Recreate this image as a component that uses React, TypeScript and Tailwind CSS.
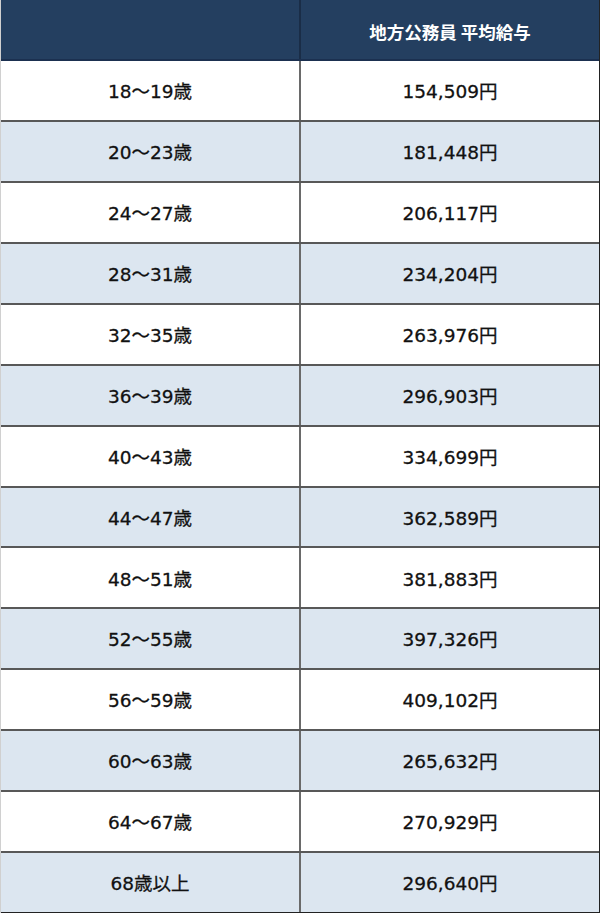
const rows: [string, string][] = [
  ["18～19歳", "154,509円"],
  ["20～23歳", "181,448円"],
  ["24～27歳", "206,117円"],
  ["28～31歳", "234,204円"],
  ["32～35歳", "263,976円"],
  ["36～39歳", "296,903円"],
  ["40～43歳", "334,699円"],
  ["44～47歳", "362,589円"],
  ["48～51歳", "381,883円"],
  ["52～55歳", "397,326円"],
  ["56～59歳", "409,102円"],
  ["60～63歳", "265,632円"],
  ["64～67歳", "270,929円"],
  ["68歳以上", "296,640円"],
];

const font = "font-['DejaVu_Sans','Noto_Sans_CJK_JP',sans-serif] [-webkit-text-stroke:0.3px_#111]";

export default function App() {
  return (
    <div className="w-[600px] h-[913px] flex flex-col bg-white border-r border-[#222] border-l border-l-[#d0d0d0]">
      {/* header */}
      <div className="flex-1 grid grid-cols-[300px_1fr] bg-[#243f60] border-b-2 border-[#1b3050]">
        <div className="border-r-2 border-[#1a2d47]" />
        <div className="flex items-center justify-center pt-[5px] text-white text-[17.5px] font-bold font-['Noto_Sans_CJK_JP',sans-serif]">
          地方公務員 平均給与
        </div>
      </div>

      {rows.map(([age, pay], i) => (
        <div
          key={age}
          className={
            "flex-1 grid grid-cols-[300px_1fr] text-[#111] text-[18.5px] " +
            font +
            (i % 2 === 1 ? " bg-[#dce6f0]" : " bg-white") +
            (i === rows.length - 1 ? " border-b border-[#222]" : " border-b-2 border-[#585858]")
          }
        >
          <div className="flex items-center justify-center pt-[3px] border-r-2 border-[#6a6a6a]">{age}</div>
          <div className="flex items-center justify-center pt-[3px]">{pay}</div>
        </div>
      ))}
    </div>
  );
}
